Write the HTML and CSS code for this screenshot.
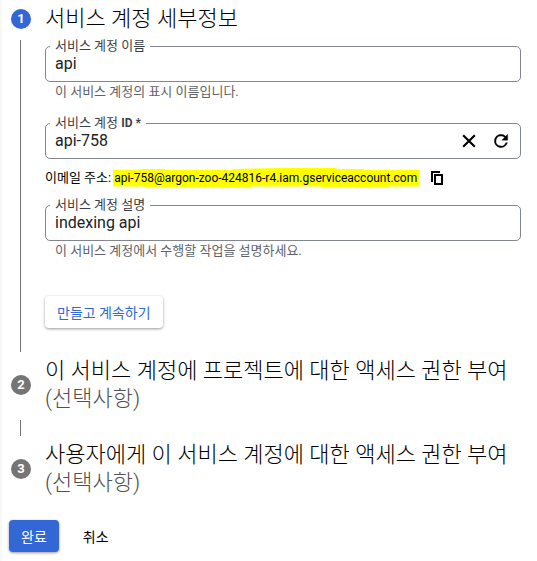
FILE: index.html
```html
<!DOCTYPE html>
<html lang="ko">

<head>
  <meta charset="UTF-8">
  <meta name="viewport" content="width=device-width, initial-scale=1.0">
  <title>서비스 계정 만들기</title>
  <link rel="stylesheet" href="styles.css">
</head>

<body>
  <form class="page">
    <ol class="stepper">
      <!-- Step 1: account details -->
      <li class="step">
        <span class="step-number active">1</span>
        <h2 class="step-title">서비스 계정 세부정보</h2>
        <div class="step-line"></div>
        <div class="step-body">
          <fieldset class="field">
            <legend><label for="account-name">서비스 계정 이름</label></legend>
            <input type="text" id="account-name" value="api" aria-describedby="name-hint">
          </fieldset>
          <p class="hint" id="name-hint">이 서비스 계정의 표시 이름입니다.</p>

          <fieldset class="field field-id">
            <legend><label for="account-id">서비스 계정 <b>ID *</b></label></legend>
            <input type="text" id="account-id" value="api-758" required>
            <button type="button" class="icon-btn" aria-label="지우기">
              <svg viewBox="0 0 24 24" width="20" height="20">
                <path d="M5 5l14 14M19 5L5 19" fill="none" stroke="currentColor" stroke-width="2.6" />
              </svg>
            </button>
            <button type="button" class="icon-btn" aria-label="새로고침">
              <svg viewBox="0 0 24 24" width="20" height="20">
                <path d="M17.65 6.35A7.95 7.95 0 0 0 12 4a8 8 0 1 0 7.73 10h-2.08A6 6 0 1 1 12 6c1.66 0 3.14.69 4.22 1.78L13 11h7V4z" fill="currentColor" stroke="currentColor" stroke-width="0.4" />
              </svg>
            </button>
          </fieldset>

          <div class="email">
            <span>이메일 주소:</span>
            <mark>api-758@argon-zoo-424816-r4.iam.gserviceaccount.com</mark>
            <button type="button" class="icon-btn copy-btn" aria-label="복사">
              <svg viewBox="0 0 12 14" width="12" height="14">
                <path d="M1 11V1h8M4 4h7v9H4z" fill="none" stroke="currentColor" stroke-width="2" />
              </svg>
            </button>
          </div>

          <fieldset class="field">
            <legend><label for="account-desc">서비스 계정 설명</label></legend>
            <input type="text" id="account-desc" value="indexing api" aria-describedby="desc-hint">
          </fieldset>
          <p class="hint" id="desc-hint">이 서비스 계정에서 수행할 작업을 설명하세요.</p>

          <button type="button" class="btn btn-raised">만들고 계속하기</button>
        </div>
      </li>

      <!-- Step 2: project access -->
      <li class="step">
        <span class="step-number">2</span>
        <h2 class="step-title">이 서비스 계정에 프로젝트에 대한 액세스 권한 부여 <span class="optional">(선택사항)</span></h2>
        <div class="step-line short"></div>
      </li>

      <!-- Step 3: user access -->
      <li class="step">
        <span class="step-number">3</span>
        <h2 class="step-title">사용자에게 이 서비스 계정에 대한 액세스 권한 부여 <span class="optional">(선택사항)</span></h2>
      </li>
    </ol>

    <div class="actions">
      <button type="submit" class="btn btn-primary">완료</button>
      <button type="button" class="btn">취소</button>
    </div>
  </form>
</body>

</html>
```
FILE: styles.css
```css
* {
  box-sizing: border-box;
}

body {
  margin: 0;
  font-family: Roboto, "Noto Sans CJK KR", sans-serif;
  font-size: 13px;
  line-height: 20px;
  background-color: #fff;
  color: #000;
}

.page {
  min-height: 100vh;
  padding: 5px 16px 8px 7px;
  border-left: 2px solid #f8f8f8;
}

.stepper {
  list-style: none;
  margin: 0;
  padding: 0 0 0 2px;
}

.step {
  display: grid;
  grid-template-columns: 20px minmax(0, 1fr);
  column-gap: 14px;
}

.step-number {
  align-self: center;
  width: 20px;
  height: 20px;
  border-radius: 50%;
  background-color: #757575;
  color: #fff;
  font-weight: bold;
  text-align: center;
}

.step-number.active {
  background-color: #3367d6;
}

.step-title {
  margin: 0;
  font-size: 22px;
  font-weight: 300;
  line-height: 28px;
}

.optional {
  display: block;
  color: #505050;
}

.step-line {
  width: 1px;
  margin: 7px 0 5px 9px;
  background-color: #757575;
}

.step-line.short {
  height: 16px;
}

.step-body {
  padding: 5px 0 29px;
}

.field {
  display: flex;
  align-items: center;
  margin: 0;
  padding: 0 9px;
  min-width: 0;
  border: 1px solid #80868b;
  border-radius: 5px;
}

.field legend {
  margin-left: -5px;
  padding: 0 5px;
  line-height: 16px;
  color: #3c4043;
}

.field b {
  font-size: 12px;
}

.field label {
  display: block;
}

.field input {
  flex: 1;
  min-width: 0;
  height: 27px;
  padding: 0 0 8px;
  border: none;
  outline: none;
  background: none;
  font-family: inherit;
  font-size: 16px;
  color: #202124;
}

.field-id {
  margin-top: 13px;
}

.icon-btn {
  display: flex;
  margin: 0 0 7px 12px;
  padding: 0;
  border: none;
  background: none;
  color: #000;
  cursor: pointer;
}

.hint {
  margin: 0;
  padding-left: 10px;
  color: #5f6368;
}

.email {
  display: flex;
  align-items: center;
  margin: 9px 0;
}

/* uneven edges, like a marker stroke */
mark {
  margin-left: 2px;
  padding: 0 2px 0 1px;
  background-color: #ff0;
  clip-path: polygon(0 10%, 9% 10%, 9% 5%, 17% 5%, 17% 10%, 39% 10%, 39% 5%, 55% 0, 73% 0, 73% 5%, 82% 5%, 82% 10%, 100% 10%, 100% 92%, 90% 92%, 90% 97%, 68% 97%, 68% 92%, 45% 92%, 45% 97%, 10% 97%, 10% 92%, 0 92%);
  font-size: 12px;
}

.copy-btn {
  margin-bottom: 0;
}

.btn {
  height: 32px;
  padding: 0 12px;
  border: none;
  border-radius: 4px;
  background: none;
  color: #000;
  font-family: inherit;
  font-size: 14px;
  cursor: pointer;
}

.btn-raised {
  display: block;
  margin-top: 35px;
  background-color: #fff;
  color: #3367d6;
  box-shadow: 0 1px 3px rgba(0, 0, 0, 0.4);
}

.btn-primary {
  background-color: #3367d6;
  color: #fff;
  box-shadow: 0 1px 3px rgba(0, 0, 0, 0.4);
}

.actions {
  display: flex;
  gap: 12px;
  margin-top: 23px;
}
```
